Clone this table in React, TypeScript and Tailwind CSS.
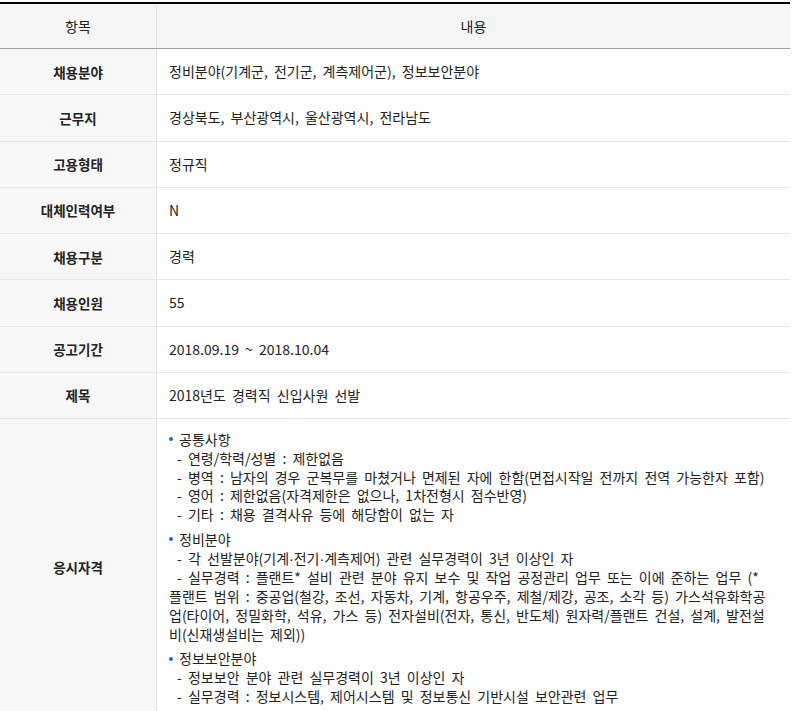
import React from "react";

const rows: [string, string][] = [
  ["채용분야", "정비분야(기계군, 전기군, 계측제어군), 정보보안분야"],
  ["근무지", "경상북도, 부산광역시, 울산광역시, 전라남도"],
  ["고용형태", "정규직"],
  ["대체인력여부", "N"],
  ["채용구분", "경력"],
  ["채용인원", "55"],
  ["공고기간", "2018.09.19 ~ 2018.10.04"],
  ["제목", "2018년도 경력직 신입사원 선발"],
];

function Bullet({ title }: { title: string }) {
  return (
    <div className="flex items-center whitespace-nowrap">
      <span className="w-[10px] flex items-center">
        <span className="block w-[4px] h-[4px] rounded-full bg-[#2f67b1]" />
      </span>
      <span>{title}</span>
    </div>
  );
}

function Dash({ children }: { children: React.ReactNode }) {
  return <div className="pl-[8px] whitespace-nowrap">{children}</div>;
}

const Dot = () => <span style={{ fontFamily: '"Liberation Sans", sans-serif' }}>·</span>;

export default function App() {
  return (
    <div
      className="w-[793px] h-[711px] overflow-hidden bg-white pt-[2px] text-[14px] text-[#222222] [word-spacing:3px]"
      style={{ fontFamily: '"Noto Sans CJK KR", "Noto Sans", sans-serif' }}
    >
      <div className="w-[790px] border-t-2 border-black">
        <div className="grid grid-cols-[157px_1fr] h-[45px] bg-[#f5f5f5] border-b border-[#9e9e9e]">
          <div className="flex items-center justify-center border-r border-[#e3e3e3]">항목</div>
          <div className="flex items-center justify-center">내용</div>
        </div>
        {rows.map(([k, v]) => (
          <div key={k} className="grid grid-cols-[157px_1fr] h-[46.25px] border-b border-[#e6e6e6]">
            <div className="flex items-center justify-center bg-[#f7f7f7] border-r border-[#e3e3e3] font-bold text-[13.5px] [word-spacing:0px]">
              {k}
            </div>
            <div className="flex items-center pl-[12px]">{v}</div>
          </div>
        ))}
        <div className="grid grid-cols-[157px_1fr] border-b border-[#e6e6e6]">
          <div className="flex items-center justify-center bg-[#f7f7f7] border-r border-[#e3e3e3] font-bold text-[13.5px]">
            응시자격
          </div>
          <div className="pl-[12px] pr-[8px] pt-[11px] pb-[10px] leading-[18.75px] flex flex-col gap-[6px]">
            <div>
              <Bullet title="공통사항" />
              <Dash>- 연령/학력/성별 : 제한없음</Dash>
              <Dash>- 병역 : 남자의 경우 군복무를 마쳤거나 면제된 자에 한함(면접시작일 전까지 전역 가능한자 포함)</Dash>
              <Dash>- 영어 : 제한없음(자격제한은 없으나, 1차전형시 점수반영)</Dash>
              <Dash>- 기타 : 채용 결격사유 등에 해당함이 없는 자</Dash>
            </div>
            <div>
              <Bullet title="정비분야" />
              <Dash>
                - 각 선발분야(기계<Dot />전기<Dot />계측제어) 관련 실무경력이 3년 이상인 자
              </Dash>
              <div className="indent-[8px] whitespace-nowrap">
                - 실무경력 : 플랜트* 설비 관련 분야 유지 보수 및 작업 공정관리 업무 또는 이에 준하는 업무 (*
                <br />
                플랜트 범위 : 중공업(철강, 조선, 자동차, 기계, 항공우주, 제철/제강, 공조, 소각 등) 가스석유화학공
                <br />
                업(타이어, 정밀화학, 석유, 가스 등) 전자설비(전자, 통신, 반도체) 원자력/플랜트 건설, 설계, 발전설
                <br />
                비(신재생설비는 제외))
              </div>
            </div>
            <div>
              <Bullet title="정보보안분야" />
              <Dash>- 정보보안 분야 관련 실무경력이 3년 이상인 자</Dash>
              <Dash>- 실무경력 : 정보시스템, 제어시스템 및 정보통신 기반시설 보안관련 업무</Dash>
            </div>
          </div>
        </div>
      </div>
    </div>
  );
}
